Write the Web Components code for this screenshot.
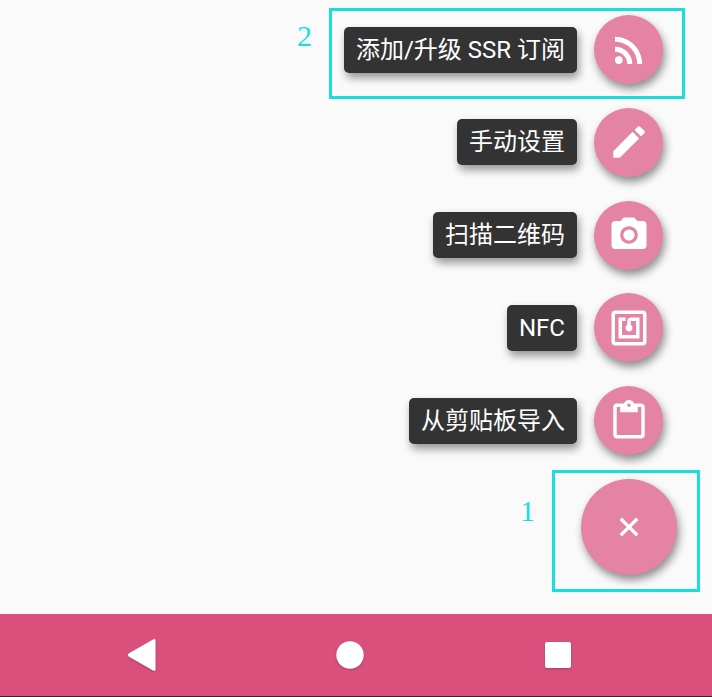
<!DOCTYPE html>
<html lang="zh-CN">
<head>
<meta charset="utf-8">
<meta name="viewport" content="width=device-width, initial-scale=1">
<title>添加配置</title>
<style>
  body { margin: 0; }
</style>
</head>
<body>
<app-screen>
  <fab-menu>
    <fab-action icon="rss" mark="2">添加/升级 SSR 订阅</fab-action>
    <fab-action icon="edit">手动设置</fab-action>
    <fab-action icon="camera">扫描二维码</fab-action>
    <fab-action icon="nfc">NFC</fab-action>
    <fab-action icon="paste">从剪贴板导入</fab-action>
    <fab-toggle mark="1"></fab-toggle>
  </fab-menu>
  <nav-bar slot="nav"></nav-bar>
</app-screen>

<script>
const ICONS = {
  rss: '<circle cx="6.18" cy="17.82" r="2.18"/><path d="M4 4.44v2.83c7.03 0 12.73 5.7 12.73 12.73h2.83c0-8.59-6.97-15.56-15.56-15.56zm0 5.66v2.83c3.9 0 7.07 3.17 7.07 7.07h2.83c0-5.47-4.43-9.9-9.9-9.9z"/>',
  edit: '<path d="M3 17.25V21h3.75L17.81 9.94l-3.75-3.75L3 17.25zM20.71 7.04c.39-.39.39-1.02 0-1.41l-2.34-2.34c-.39-.39-1.02-.39-1.41 0l-1.83 1.83 3.75 3.75 1.83-1.83z"/>',
  camera: '<circle cx="12" cy="12" r="3.2"/><path d="M9 2L7.17 4H4c-1.1 0-2 .9-2 2v12c0 1.1.9 2 2 2h16c1.1 0 2-.9 2-2V6c0-1.1-.9-2-2-2h-3.17L15 2H9zm3 15c-2.76 0-5-2.24-5-5s2.24-5 5-5 5 2.24 5 5-2.24 5-5 5z"/>',
  nfc: '<path d="M20 2H4c-1.1 0-2 .9-2 2v16c0 1.1.9 2 2 2h16c1.1 0 2-.9 2-2V4c0-1.1-.9-2-2-2zm0 18H4V4h16v16zM18 6h-5c-1.1 0-2 .9-2 2v2.28c-.6.35-1 .98-1 1.72 0 1.1.9 2 2 2s2-.9 2-2c0-.74-.4-1.38-1-1.72V8h3v8H8V8h2V6H6v12h12V6z"/>',
  paste: '<path d="M19 2h-4.18C14.4.84 13.3 0 12 0c-1.3 0-2.4.84-2.82 2H5c-1.1 0-2 .9-2 2v16c0 1.1.9 2 2 2h14c1.1 0 2-.9 2-2V4c0-1.1-.9-2-2-2zm-7 0c.55 0 1 .45 1 1s-.45 1-1 1-1-.45-1-1 .45-1 1-1zm7 18H5V4h2v3h10V4h2v16z"/>'
};

const define = (name, html, setup) => {
  const template = document.createElement('template');
  template.innerHTML = html;
  customElements.define(name, class extends HTMLElement {
    constructor() {
      super();
      this.attachShadow({ mode: 'open' }).append(template.content.cloneNode(true));
    }
    connectedCallback() {
      if (setup) setup(this, this.shadowRoot);
    }
  });
};

const setMark = (host, root) => {
  const mark = root.querySelector('callout-frame');
  if (host.hasAttribute('mark')) mark.textContent = host.getAttribute('mark');
  else mark.remove();
};

define('app-screen', `
  <style>
    :host {
      display: flex; flex-direction: column; min-height: 100vh;
      background: #fafafa; overflow: hidden;
      font-family: Roboto, "Noto Sans CJK SC", sans-serif;
    }
    main { flex: 1; display: flex; flex-direction: column; }
  </style>
  <main><slot></slot></main>
  <slot name="nav"></slot>`);

define('fab-menu', `
  <style>
    :host {
      flex: 1; display: flex; flex-direction: column;
      justify-content: space-between; align-items: flex-end; gap: 16px;
      padding: 15px 35px 39px 16px;
    }
  </style>
  <slot></slot>`);

define('callout-frame', `
  <style>
    :host {
      position: absolute; inset: var(--frame-inset); box-sizing: border-box;
      border: 3px solid #1adede; pointer-events: none;
    }
    span {
      position: absolute; right: 100%; top: var(--mark-top, 8px); margin-right: 20px;
      font: 30px/34px "Liberation Serif", serif; color: #1adede;
    }
  </style>
  <span><slot></slot></span>`);

define('fab-action', `
  <style>
    :host {
      position: relative; display: flex; align-items: center; gap: 17px;
      margin-right: 14px; --frame-inset: -7px -22px -15px -15px;
    }
    label {
      padding: 0 12px; border-radius: 5px; background: #333; color: #fff;
      font-size: 24px; line-height: 46px; white-space: nowrap;
      box-shadow: 2px 5px 8px rgba(0, 0, 0, .4);
    }
    button {
      display: grid; place-items: center; width: 69px; height: 69px;
      padding: 0; border: 0; border-radius: 50%; background: #e483a3; color: #fff;
      box-shadow: 2px 5px 8px rgba(0, 0, 0, .44); cursor: pointer;
    }
    svg { width: 42px; height: 42px; fill: currentColor; }
  </style>
  <label for="action"><slot></slot></label>
  <button id="action" type="button"><svg viewBox="0 0 24 24" aria-hidden="true"></svg></button>
  <callout-frame></callout-frame>`,
  (host, root) => {
    root.querySelector('svg').innerHTML = ICONS[host.getAttribute('icon')];
    setMark(host, root);
  });

define('fab-toggle', `
  <style>
    :host {
      position: relative; display: block;
      --frame-inset: -9px -23px -17px -29px; --mark-top: 21px;
    }
    button {
      display: grid; place-items: center; width: 96px; height: 96px;
      padding: 0; border: 0; border-radius: 50%; background: #e483a3; color: #fff;
      box-shadow: 2px 5px 8px rgba(0, 0, 0, .44); cursor: pointer;
    }
    svg { width: 40px; height: 40px; fill: currentColor; transform: rotate(45deg); }
  </style>
  <button type="button" aria-label="关闭">
    <svg viewBox="0 0 24 24" aria-hidden="true"><path d="M19 13h-6v6h-2v-6H5v-2h6V5h2v6h6v2z"/></svg>
  </button>
  <callout-frame></callout-frame>`, setMark);

define('nav-bar', `
  <style>
    :host { display: block; background: #d9507d; border-bottom: 1px solid #2b2b2b; }
    nav { display: flex; padding: 0 50px 0 38px; }
    button {
      flex: 1; display: grid; place-items: center; height: 82px;
      padding: 0; border: 0; background: none; color: #fff; cursor: pointer;
    }
    svg { width: 36px; height: 36px; fill: currentColor; filter: drop-shadow(0 1px 1px rgba(0, 0, 0, .2)); }
  </style>
  <nav>
    <button type="button" aria-label="返回"><svg viewBox="0 0 36 36"><path d="M5 16.300Q2.600 18 5 19.700L29.500 33.700Q31.500 34.600 31.500 32.500V3.500Q31.500 1.400 29.500 2.300Z"/></svg></button>
    <button type="button" aria-label="主页"><svg viewBox="0 0 36 36"><circle cx="18" cy="18" r="13.700"/></svg></button>
    <button type="button" aria-label="最近"><svg viewBox="0 0 36 36"><rect x="5" y="5" width="26" height="26" rx="2"/></svg></button>
  </nav>`);
</script>
</body>
</html>
